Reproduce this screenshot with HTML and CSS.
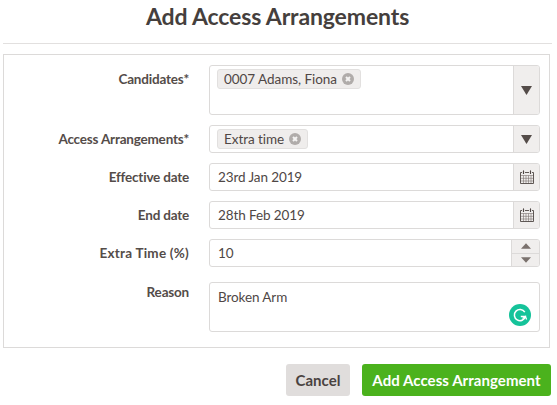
FILE: index.html
```html
<!DOCTYPE html>
<html lang="en">
<head>
<meta charset="utf-8">
<title>Add Access Arrangements</title>
<link rel="stylesheet" href="styles.css">
</head>
<body>
<div class="dialog">
  <h1 class="title">Add Access Arrangements</h1>
  <form class="panel">
    <div class="row">
      <div class="label">Candidates*</div>
      <div class="field tall">
        <div class="value tags"><span class="tag">0007 Adams, Fiona <svg class="x" viewBox="0 0 12 12"><circle cx="6" cy="6" r="6" fill="#b0acaa"/><path d="M4 4l4 4M8 4l-4 4" stroke="#f4f3f2" stroke-width="2"/></svg></span></div>
        <div class="addon wide"><svg class="caret" viewBox="0 0 11 9"><path d="M0 0h11L5.500 9z"/></svg></div>
      </div>
    </div>
    <div class="row">
      <div class="label">Access Arrangements*</div>
      <div class="field">
        <div class="value tags"><span class="tag">Extra time <svg class="x" viewBox="0 0 12 12"><circle cx="6" cy="6" r="6" fill="#b0acaa"/><path d="M4 4l4 4M8 4l-4 4" stroke="#f4f3f2" stroke-width="2"/></svg></span></div>
        <div class="addon wide"><svg class="caret" viewBox="0 0 11 9"><path d="M0 0h11L5.500 9z"/></svg></div>
      </div>
    </div>
    <div class="row">
      <div class="label">Effective date</div>
      <div class="field">
        <div class="value">23rd Jan 2019</div>
        <div class="addon wide"><svg class="cal" viewBox="0 0 14 14"><path d="M.5 5.500h13M.5 8.300h13M.5 11h13M3.500 5.500v8M6 5.500v8M8.500 5.500v8M11 5.500v8" fill="none" stroke="#7a716d" stroke-width=".6"/><path d="M2 2.500H.5v11h13v-11H12M5 2.500h4" fill="none" stroke="#4f4745" stroke-width=".9"/><path d="M3.500 .8v2.700M10.500 .8v2.700" stroke="#4f4745" stroke-width="1.200" stroke-linecap="round"/></svg></div>
      </div>
    </div>
    <div class="row">
      <div class="label">End date</div>
      <div class="field">
        <div class="value">28th Feb 2019</div>
        <div class="addon wide"><svg class="cal" viewBox="0 0 14 14"><path d="M.5 5.500h13M.5 8.300h13M.5 11h13M3.500 5.500v8M6 5.500v8M8.500 5.500v8M11 5.500v8" fill="none" stroke="#7a716d" stroke-width=".6"/><path d="M2 2.500H.5v11h13v-11H12M5 2.500h4" fill="none" stroke="#4f4745" stroke-width=".9"/><path d="M3.500 .8v2.700M10.500 .8v2.700" stroke="#4f4745" stroke-width="1.200" stroke-linecap="round"/></svg></div>
      </div>
    </div>
    <div class="row">
      <div class="label spaced">Extra Time (%)</div>
      <div class="field">
        <div class="value">10</div>
        <div class="spinner">
          <div class="spin"><svg class="tri" viewBox="0 0 11 6"><path d="M5.500 0L11 6H0z"/></svg></div>
          <div class="spin"><svg class="tri" viewBox="0 0 11 6"><path d="M0 0h11L5.500 6z"/></svg></div>
        </div>
      </div>
    </div>
    <div class="row reason">
      <div class="label">Reason</div>
      <div class="field area">
        <div class="value">Broken Arm</div>
        <svg class="grammarly" viewBox="0 0 22 22"><circle cx="11" cy="11" r="11" fill="#15c39a"/><path d="M15.800 8.200A5.600 5.600 0 1 0 16.400 12.500H11.800" fill="none" stroke="#fff" stroke-width="1.500"/><path d="M13.500 14.500l2.900-2 1.200 3" fill="none" stroke="#fff" stroke-width="1.300"/></svg>
      </div>
    </div>
  </form>
  <div class="actions">
    <button class="btn cancel" type="button">Cancel</button>
    <button class="btn add" type="button">Add Access Arrangement</button>
  </div>
</div>
</body>
</html>
```
FILE: styles.css
```css
html, body { margin: 0; padding: 0; background: #fff; }
body { width: 557px; height: 405px; overflow: hidden; font-family: Lato, "Open Sans", sans-serif; color: #4f4745; font-size: 13.5px; }
.dialog { padding: 0 5px 0 3px; }
.title { margin: 0; height: 43px; border-bottom: 1px solid #e2e0df; box-sizing: content-box; text-align: center; font-size: 23px; line-height: 32px; font-weight: 700; letter-spacing: -.13px; color: #453f3d; }
.panel { margin-top: 10px; width: 547px; box-sizing: border-box; height: 294px; border: 1px solid #dcdad9; padding: 10px 9px 15px 0; display: flex; flex-direction: column; gap: 10px; }
.row { display: grid; grid-template-columns: 185px 331px; column-gap: 20px; }
.reason { margin-top: 5px; }
.label { font-weight: 700; text-align: right; line-height: 28px; letter-spacing: -.2px; color: #544c49; }
.spaced { letter-spacing: .23px; }
.reason .label { line-height: 20px; }
.field { display: flex; height: 28px; box-sizing: border-box; border: 1px solid #dcdad9; border-radius: 3px; overflow: hidden; position: relative; background: #fff; }
.tall { height: 50px; }
.area { height: 50px; }
.value { flex: 1; padding: 0 8px; line-height: 26px; letter-spacing: -.1px; color: #4f4745; }
.area .value { padding-top: 1px; }
.tags { padding: 3px 7px; line-height: 18px; }
.tag { display: inline-flex; align-items: center; gap: 5px; height: 20px; box-sizing: border-box; padding: 0 6px; border: 1px solid #e2e0df; border-radius: 3px; background: #efedec; letter-spacing: -.05px; }
.x { width: 12px; height: 12px; }
.addon { display: flex; align-items: center; justify-content: center; border-left: 1px solid #dcdad9; background: #f0eeed; }
.wide { width: 25px; }
.caret { width: 11px; height: 9px; fill: #544c49; }
.cal { width: 14px; height: 14px; }
.spinner { width: 27px; display: flex; flex-direction: column; border-left: 1px solid #dcdad9; background: #f0eeed; }
.spin { flex: 1; display: flex; align-items: center; justify-content: center; }
.spin + .spin { border-top: 1px solid #dcdad9; }
.tri { width: 10px; height: 6px; fill: #7a716d; }
.grammarly { position: absolute; right: 8px; bottom: 5px; width: 22px; height: 22px; }
.actions { display: flex; justify-content: flex-end; gap: 12px; margin-top: 16px; width: 548px; }
.btn { height: 32px; border: 0; border-radius: 3px; font-family: inherit; font-size: 15px; font-weight: 700; letter-spacing: .06px; padding: 0; }
.cancel { width: 64px; background: #e0dddc; color: #4a4341; }
.add { width: 189px; background: #4bb21d; color: #fff; }
```
